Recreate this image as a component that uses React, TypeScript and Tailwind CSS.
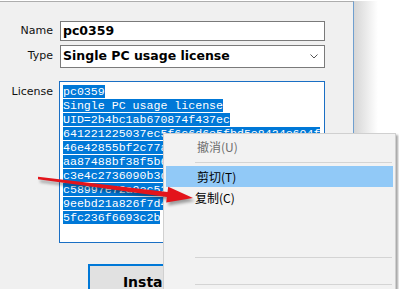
import React from 'react'

const licenseLines = [
  'pc0359',
  'Single PC usage license',
  'UID=2b4bc1ab670874f437ec',
  '641221225037ec5f6c6d6e5fbd5e8424e604f',
  '46e42855bf2c77a',
  'aa87488bf38f5b6',
  'c3e4c2736090b3d',
  'c58997e72a9ec52',
  '9eebd21a826f7d4',
  '5fc236f6693c2b',
]

const App: React.FC = () => {
  return (
    <div className="relative w-[399px] h-[289px] overflow-hidden bg-white font-['DejaVu_Sans',sans-serif] text-[#111]">
      <div className="flex mt-px h-[288px]">
        <div className="w-[354px] shrink-0 h-full border-t border-r border-t-[#adadad] border-r-[#6f9fcf] bg-[#f0f0f0] pt-[19px]">
          <div className="flex items-center h-[20px]">
            <span className="w-[53px] text-right text-[11px]">Name</span>
            <div className="ml-[7px] w-[265px] h-[20px] border border-[#7a7a7a] bg-white pl-[2px] flex items-center font-bold text-[12.5px] text-black">
              pc0359
            </div>
          </div>
          <div className="flex items-center h-[23px] mt-[4px]">
            <span className="w-[53px] text-right text-[11px]">Type</span>
            <div className="ml-[7px] w-[265px] h-[23px] border border-[#7a7a7a] bg-white pl-[2px] pr-[6px] flex items-center justify-between font-bold text-[12.5px] text-black">
              <span>Single PC usage license</span>
              <svg width="8" height="5" viewBox="0 0 8 5">
                <path d="M0.5 0.5 L4 4 L7.5 0.5" fill="none" stroke="#555" strokeWidth="1" />
              </svg>
            </div>
          </div>
          <div className="flex items-start mt-[13px]">
            <span className="w-[53px] text-right text-[11px] pt-[3px]">License</span>
            <div className="ml-[6px] w-[266px] h-[162px] border border-[#1a6fc4] bg-white pt-[3px] pl-[3px] font-['Liberation_Mono',monospace] text-[11.6px] leading-[14px] whitespace-pre overflow-hidden">
              {licenseLines.map((line, i) => (
                <div key={i} className="h-[14px]">
                  <span className="bg-[#0078d7] text-white">{line}</span>
                </div>
              ))}
            </div>
          </div>
          <button className="mt-[21px] ml-[88px] w-[119px] h-[36px] border-2 border-[#0078d7] bg-[#e1e1e1] font-bold text-[14px] text-black">
            Install
          </button>
        </div>
        <div className="w-[24px] h-full bg-linear-to-r from-[#d6d6d6] to-white" />
      </div>

      {/* context menu */}
      <div className="absolute left-[163px] top-[133px] w-[233px] h-[170px] bg-[#f2f2f2] border border-[#d0d0d0] shadow-[2px_2px_2px_rgba(0,0,0,0.35)] pt-[2px] font-['Noto_Sans_CJK_SC',sans-serif] text-[12px]">
        <div className="h-[22px] flex items-center pl-[33px] text-[#6d6d6d]">撤消(U)</div>
        <div className="mt-[4px] mb-[3px] ml-[31px] mr-[3px] h-px bg-[#d4d4d4]" />
        <div className="h-[21px] mx-[2px] bg-[#91c9f7] flex items-center pl-[31px] text-black">剪切(T)</div>
        <div className="h-[22px] flex items-center pl-[31px] text-black">复制(C)</div>
        <div className="h-[48px]" />
        <div className="ml-[31px] mr-[3px] h-px bg-[#d4d4d4]" />
        <div className="h-[26px]" />
        <div className="ml-[31px] mr-[3px] h-px bg-[#d4d4d4]" />
      </div>

      {/* red arrow */}
      <svg className="absolute left-0 top-0 pointer-events-none" width="399" height="289" viewBox="0 0 399 289">
        <defs>
          <filter id="blur" x="-10%" y="-50%" width="120%" height="200%">
            <feGaussianBlur stdDeviation="1.5" />
          </filter>
        </defs>
        <polygon
          points="38,176.8 167.5,192.1 168.2,186.7 193,198 166.2,202.5 166.9,197.1 38,179.2"
          fill="#000"
          opacity="0.35"
          transform="translate(2,3)"
          filter="url(#blur)"
        />
        <polygon
          points="38,176.8 167.5,192.1 168.2,186.7 193,198 166.2,202.5 166.9,197.1 38,179.2"
          fill="#e3141b"
        />
      </svg>
    </div>
  )
}

export default App
